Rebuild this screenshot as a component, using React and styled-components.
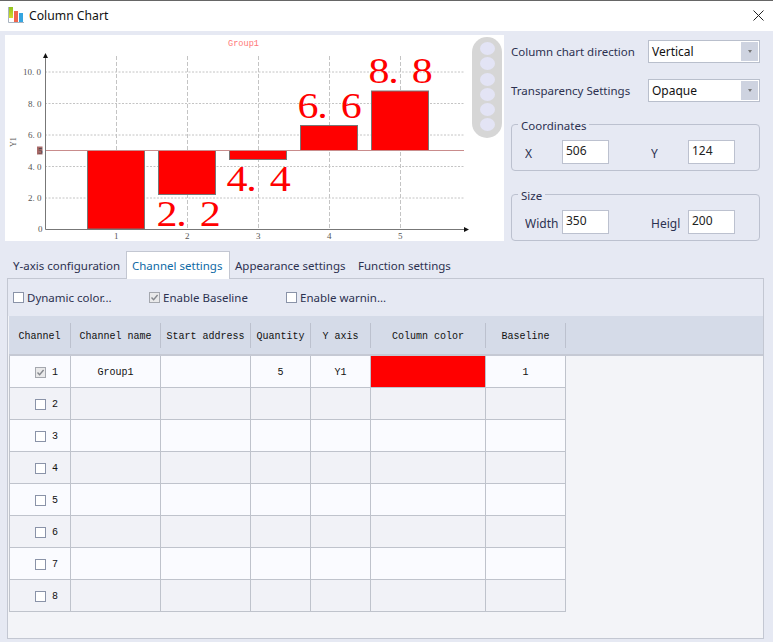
import React from "react"
import styled, { createGlobalStyle } from "styled-components"

const GlobalStyle = createGlobalStyle`
  html, body {
    margin: 0;
    padding: 0;
    background: #e6e9f3;
    overflow: hidden;
  }
  * {
    box-sizing: border-box;
  }
`

const Window = styled.div`
  width: 773px;
  height: 642px;
  background: #e6e9f3;
  border-top: 1px solid #666;
  font-family: "Noto Sans", "Open Sans", sans-serif;
  font-size: 12px;
  color: #2c3150;
`

const TitleBar = styled.div`
  height: 30px;
  background: #fff;
  display: flex;
  align-items: center;
  padding: 0 9px 1px 8px;
  color: #111;
`

const TitleText = styled.span`
  margin-left: 5px;
  flex: 1;
  font-size: 12.2px;
`

const TopArea = styled.div`
  display: flex;
  padding: 4px 0 0 5px;
  height: 220px;
`

const ChartCard = styled.div`
  position: relative;
  width: 499px;
  height: 206px;
  background: #fff;
  flex: none;
`

const Pill = styled.div`
  position: absolute;
  left: 467px;
  top: 2px;
  width: 30px;
  height: 101px;
  border-radius: 15px;
  background: #d6d6d6;
  display: flex;
  flex-direction: column;
  align-items: center;
  padding-top: 5px;
  gap: 2.3px;
`

const PillDot = styled.span`
  width: 15px;
  height: 13px;
  border-radius: 50%;
  background: #e3e4f5;
`

const SidePanel = styled.div`
  width: 249px;
  margin-left: 7px;
  padding-top: 5px;
`

const FieldRow = styled.div`
  display: flex;
  align-items: center;
  justify-content: space-between;
  height: 23px;
  margin-bottom: 16px;
`

const FieldLabel = styled.span`
  font-size: 11.5px;
`

const Select = styled.div`
  width: 112px;
  height: 23px;
  background: #fff;
  border: 1px solid #b9bfcc;
  display: flex;
  align-items: center;
  justify-content: space-between;
  padding: 1px 1px 1px 3px;
  color: #111;
`

const SelectButton = styled.span`
  width: 17px;
  height: 19px;
  background: #ced3e0;
  display: flex;
  align-items: center;
  justify-content: center;

  &::after {
    content: "";
    border-left: 2.5px solid transparent;
    border-right: 2.5px solid transparent;
    border-top: 3px solid #777;
  }
`

const GroupBox = styled.fieldset`
  margin: 0 0 ${p => p.$gap}px;
  padding: 10px 0 6px 13px;
  height: 53px;
  border: 1px solid #bcc1cf;
  border-radius: 4px;
  display: grid;
  grid-template-columns: 37px 89px 37px 47px;
  align-items: center;
`

const GroupTitle = styled.legend`
  margin-left: -7px;
  padding: 0 3px;
  height: 12px;
  font-size: 11.5px;
  line-height: 16px;
`

const CoordLabel = styled.span`
  font-size: 12px;
  padding-top: 2px;
  overflow: hidden;
  white-space: nowrap;
`

const NumberBox = styled.div`
  width: 47px;
  height: 24px;
  background: #fff;
  border: 1px solid #bcc1cf;
  padding-left: 3px;
  line-height: 19px;
  color: #222;
`

const Tabs = styled.div`
  display: flex;
  height: 27px;
  margin-left: 7px;
  align-items: flex-end;
`

const Tab = styled.div`
  height: ${p => (p.$active ? 28 : 27)}px;
  margin-bottom: -1px;
  width: ${p => p.$w}px;
  padding-left: ${p => p.$pad}px;
  padding-top: 6px;
  font-size: 11.5px;
  white-space: nowrap;
  position: relative;
  color: ${p => (p.$active ? "#0f6aa5" : "#2c3150")};
  background: ${p => (p.$active ? "#fff" : "transparent")};
  border: ${p => (p.$active ? "1px solid #c3c7d2" : "none")};
  border-bottom: none;
`

const TabPanel = styled.div`
  margin-left: 7px;
  width: 757px;
  height: 361px;
  border: 1px solid #c3c7d2;
  background: #f3f4f8;
`

const OptionBar = styled.div`
  height: 37px;
  background: #e6e9f3;
  display: grid;
  grid-template-columns: 136px 137px 1fr;
  align-items: center;
  padding-left: 5px;
`

const Option = styled.div`
  display: flex;
  align-items: center;
  gap: 3px;
  font-size: 11.5px;
  white-space: nowrap;
`

const Box = styled.span`
  width: 11px;
  height: 11px;
  flex: none;
  display: flex;
  border: 1px solid ${p => (p.$checked ? "#a4a7ae" : "#8a93a8")};
  background: ${p => (p.$checked ? "#e9e9ea" : "#fff")};
`

const TableHead = styled.div`
  height: 40px;
  margin-left: 1px;
  background: #d5dbe8;
  border-bottom: 2px solid #c5c9d4;
  display: flex;
`

const HeadCell = styled.div`
  width: ${p => p.$w}px;
  height: 25px;
  margin-top: 7px;
  flex: none;
  border-right: 1px solid #bcc1ce;
  font-family: "Liberation Mono", monospace;
  font-size: 10px;
  line-height: 27px;
  text-align: center;
  white-space: nowrap;
  color: #111;
`

const TableBody = styled.div`
  margin-left: 1px;
  width: 557px;
  border-left: 1px solid #bfc3cc;
`

const Row = styled.div`
  display: flex;
  height: 32px;
  background: ${p => (p.$even ? "#fafbff" : "#f1f2f7")};
`

const Cell = styled.div`
  width: ${p => p.$w}px;
  flex: none;
  border-right: 1px solid #bfc3cc;
  border-bottom: 1px solid #bfc3cc;
  display: flex;
  align-items: center;
  justify-content: center;
  padding-top: 1px;
  font-family: "Liberation Mono", monospace;
  font-size: 10px;
  color: #111;
  background: ${p => p.$fill || "transparent"};
`

const ChannelCell = styled(Cell)`
  justify-content: flex-start;
  padding-left: 25px;
  gap: 6px;
`

const columns = [
  { title: "Channel", w: 62 },
  { title: "Channel name", w: 90 },
  { title: "Start address", w: 90 },
  { title: "Quantity", w: 60 },
  { title: "Y axis", w: 60 },
  { title: "Column color", w: 115 },
  { title: "Baseline", w: 80 },
]

const Check = ({ checked }) => (
  <Box $checked={checked}>
    {checked && (
      <svg width="9" height="9" viewBox="0 0 9 9">
        <path d="M1.5 4.5 L3.6 6.8 L7.6 2" fill="none" stroke="#85888e" strokeWidth="1.4" />
      </svg>
    )}
  </Box>
)

const ChartIcon = () => (
  <svg width="16" height="17" viewBox="0 0 16 17">
    <defs>
      <linearGradient id="greenBar" x1="0" y1="0" x2="0" y2="1">
        <stop offset="0" stopColor="#8fc31f" />
        <stop offset="1" stopColor="#d6dc2a" />
      </linearGradient>
    </defs>
    <path d="M0.5 0 V15.5 H16" fill="none" stroke="#a9b4c0" />
    <rect x="1" y="0" width="4" height="11" fill="url(#greenBar)" />
    <rect x="6" y="4" width="4" height="11" fill="#f0664e" />
    <rect x="11" y="6" width="4" height="9" fill="#35a5e0" />
  </svg>
)

const CloseIcon = () => (
  <svg width="11" height="11" viewBox="0 0 11 11">
    <path d="M0.5 0.5 L10.5 10.5 M10.5 0.5 L0.5 10.5" stroke="#222" strokeWidth="1" />
  </svg>
)

const yTicks = [
  { y: 72, label: "10. 0", x: 23 },
  { y: 103.5, label: "8. 0", x: 28 },
  { y: 135, label: "6. 0", x: 28 },
  { y: 166.5, label: "4. 0", x: 28 },
  { y: 198, label: "2. 0", x: 28 },
]
const xGrid = [116, 187, 258, 329, 400]
const bars = [
  { x: 87.5, top: 150.5, h: 78.5 },
  { x: 158.5, top: 150.5, h: 44 },
  { x: 229.5, top: 150.5, h: 9 },
  { x: 300.5, top: 125.5, h: 25 },
  { x: 371.5, top: 91, h: 59.5 },
]
const values = [
  { text: "2. 2", x: 156.5, y: 226 },
  { text: "4. 4", x: 226.5, y: 191 },
  { text: "6. 6", x: 297.5, y: 118 },
  { text: "8. 8", x: 368.5, y: 83 },
]

// the chart svg uses page coordinates, viewBox starts where the card does
const Chart = () => (
  <svg width="499" height="206" viewBox="5 35 499 206">
    <text x="228" y="46" fontFamily="Liberation Mono" fontSize="8.6" fill="#f77">Group1</text>
    {yTicks.map(t => (
      <g key={t.y}>
        <path d={`M45 ${t.y} H464`} stroke="#c4c4c4" strokeDasharray="2 1.5" />
        <text x={t.x} y={t.y + 3} fontFamily="Liberation Serif" fontSize="9" fill="#555">{t.label}</text>
      </g>
    ))}
    {xGrid.map((x, i) => (
      <g key={x}>
        <path d={`M${x + 0.5} 56 V229`} stroke="#c4c4c4" strokeDasharray="4 2" />
        <text x={x - 2} y={239} fontFamily="Liberation Serif" fontSize="9" fill="#555">{i + 1}</text>
      </g>
    ))}
    <text x="38" y="232" fontFamily="Liberation Serif" fontSize="9" fill="#555">0</text>
    <text transform="translate(16 147) rotate(-90)" fontFamily="Liberation Serif" fontSize="8" fill="#555">Y1</text>
    <rect x="37" y="146.5" width="5.5" height="8" fill="#a86a6a" />
    <text x="38" y="153.5" fontFamily="Liberation Serif" fontSize="9" fill="#444">5</text>
    {bars.map(b => (
      <rect key={b.x} x={b.x} y={b.top} width="57" height={b.h} fill="#f00" stroke="#777" />
    ))}
    <path d="M45 150.5 H464" stroke="#c98c8c" />
    <path d="M45.5 57 V229.5 H465" fill="none" stroke="#777" />
    <path d="M45.5 53 L43 58 H48 Z M469 229.5 L464 227 V232 Z" fill="#111" />
    {values.map(v => (
      <text
        key={v.y}
        transform={`translate(${v.x} ${v.y}) scale(1.2 1)`}
        x="0 16.5 25 36"
        fontFamily="Liberation Serif"
        fontSize="35"
        fill="#f00"
      >
        {v.text}
      </text>
    ))}
  </svg>
)

export default function App() {
  return (
    <Window>
      <GlobalStyle />
      <TitleBar>
        <ChartIcon />
        <TitleText>Column Chart</TitleText>
        <CloseIcon />
      </TitleBar>

      <TopArea>
        <ChartCard>
          <Chart />
          <Pill>
            {[0, 1, 2, 3, 4, 5].map(i => <PillDot key={i} />)}
          </Pill>
        </ChartCard>
        <SidePanel>
          <FieldRow>
            <FieldLabel>Column chart direction</FieldLabel>
            <Select>Vertical<SelectButton /></Select>
          </FieldRow>
          <FieldRow>
            <FieldLabel>Transparency Settings</FieldLabel>
            <Select>Opaque<SelectButton /></Select>
          </FieldRow>
          <GroupBox $gap={17}>
            <GroupTitle>Coordinates</GroupTitle>
            <CoordLabel>X</CoordLabel>
            <NumberBox>506</NumberBox>
            <CoordLabel>Y</CoordLabel>
            <NumberBox>124</NumberBox>
          </GroupBox>
          <GroupBox $gap={0}>
            <GroupTitle>Size</GroupTitle>
            <CoordLabel>Width</CoordLabel>
            <NumberBox>350</NumberBox>
            <CoordLabel>Heigl</CoordLabel>
            <NumberBox>200</NumberBox>
          </GroupBox>
        </SidePanel>
      </TopArea>

      <Tabs>
        <Tab $w={119} $pad={6}>Y-axis configuration</Tab>
        <Tab $active $w={104} $pad={5}>Channel settings</Tab>
        <Tab $w={123} $pad={5}>Appearance settings</Tab>
        <Tab $w={110} $pad={5}>Function settings</Tab>
      </Tabs>

      <TabPanel>
        <OptionBar>
          <Option><Check />Dynamic color...</Option>
          <Option><Check checked />Enable Baseline</Option>
          <Option><Check />Enable warnin...</Option>
        </OptionBar>
        <TableHead>
          {columns.map(c => <HeadCell key={c.title} $w={c.w}>{c.title}</HeadCell>)}
        </TableHead>
        <TableBody>
          {[1, 2, 3, 4, 5, 6, 7, 8].map(n => (
            <Row key={n} $even={n % 2 === 1}>
              <ChannelCell $w={61}><Check checked={n === 1} />{n}</ChannelCell>
              <Cell $w={90}>{n === 1 && "Group1"}</Cell>
              <Cell $w={90} />
              <Cell $w={60}>{n === 1 && "5"}</Cell>
              <Cell $w={60}>{n === 1 && "Y1"}</Cell>
              <Cell $w={115} $fill={n === 1 ? "#f00" : undefined} />
              <Cell $w={80}>{n === 1 && "1"}</Cell>
            </Row>
          ))}
        </TableBody>
      </TabPanel>
    </Window>
  )
}
